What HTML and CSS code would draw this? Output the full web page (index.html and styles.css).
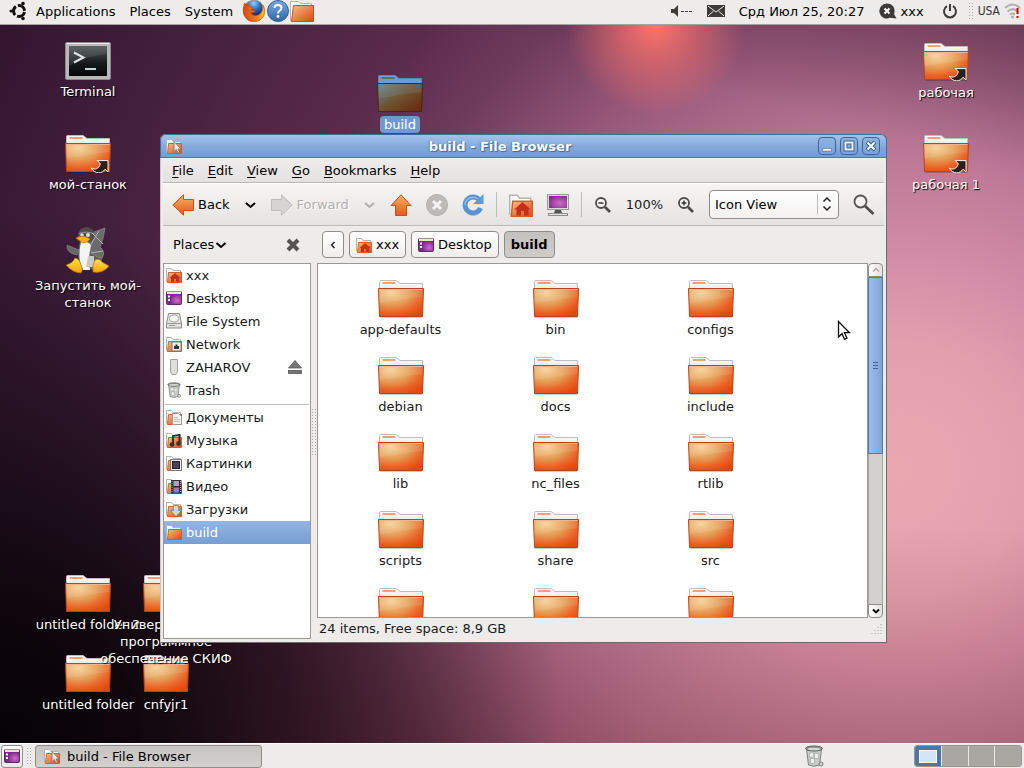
FILE: index.html
```html
<!DOCTYPE html>
<html lang="en">
<head>
  <meta charset="UTF-8" />
  <meta name="viewport" content="width=device-width, initial-scale=1" />
  <title>build - File Browser</title>
  <link rel="stylesheet" href="styles.css">
</head>
<body>
  <!-- shared icons -->
  <svg class="defs" width="0" height="0" aria-hidden="true">
    <defs>
      <radialGradient id="gFolder" cx="0.28" cy="0.15" r="0.95">
        <stop offset="0" stop-color="#f6d197" />
        <stop offset="0.45" stop-color="#e59d56" />
        <stop offset="0.75" stop-color="#ea6428" />
        <stop offset="1" stop-color="#e2480f" />
      </radialGradient>
      <linearGradient id="gPaper" x1="0" y1="0" x2="0" y2="1">
        <stop offset="0" stop-color="#ffffff" />
        <stop offset="1" stop-color="#e4e4e6" />
      </linearGradient>
      <linearGradient id="gOrange" x1="0" y1="0" x2="0" y2="1">
        <stop offset="0" stop-color="#f3b264" />
        <stop offset="1" stop-color="#e8571c" />
      </linearGradient>
      <linearGradient id="gMini" x1="0" y1="0" x2="1" y2="1">
        <stop offset="0" stop-color="#f6bf86" />
        <stop offset="1" stop-color="#dd4714" />
      </linearGradient>
      <linearGradient id="gTerm" x1="0" y1="0" x2="0" y2="1">
        <stop offset="0" stop-color="#4b5254" />
        <stop offset="0.6" stop-color="#15181a" />
        <stop offset="1" stop-color="#050606" />
      </linearGradient>
      <linearGradient id="gSel" x1="0" y1="0" x2="1" y2="1">
        <stop offset="0" stop-color="#6d8a8e" />
        <stop offset="0.5" stop-color="#6d5330" />
        <stop offset="1" stop-color="#6b2408" />
      </linearGradient>
      <radialGradient id="gPurple" cx="0.6" cy="0.6" r="0.7">
        <stop offset="0" stop-color="#d06cc8" />
        <stop offset="1" stop-color="#7e2a8c" />
      </radialGradient>
      <linearGradient id="gHelp" x1="0" y1="0" x2="0" y2="1">
        <stop offset="0" stop-color="#7aabde" />
        <stop offset="1" stop-color="#2f66a6" />
      </linearGradient>
      <radialGradient id="gGlobe" cx="0.45" cy="0.2" r="0.8">
        <stop offset="0" stop-color="#8fd0f5" />
        <stop offset="0.5" stop-color="#2c6fc0" />
        <stop offset="1" stop-color="#12246a" />
      </radialGradient>
      <linearGradient id="gFox" x1="0" y1="0" x2="1" y2="0">
        <stop offset="0" stop-color="#d9480f" />
        <stop offset="0.6" stop-color="#ee7a14" />
        <stop offset="1" stop-color="#fbc52d" />
      </linearGradient>
      <linearGradient id="gFeet" x1="0" y1="0" x2="0" y2="1">
        <stop offset="0" stop-color="#ffe04a" />
        <stop offset="1" stop-color="#f7a30a" />
      </linearGradient>
    </defs>

    <symbol id="folder" viewBox="0 0 46 38">
      <path d="M1.500 12V1.500Q1.500.5 2.500.5H18l4 3H44.500V12z" fill="url(#gPaper)" stroke="#bdbdc0" />
      <rect x="4.500" y="2" width="13" height="2" fill="#f2a27a" />
      <path d="M.5 8.500H45.500L44.500 36.500H1.500z" fill="url(#gFolder)" stroke="#b5451a" />
      <path d="M1.500 9.500H44.500V17C30 18 16 22 1.500 23z" fill="#fff" opacity=".1" />
      <path d="M1.500 9.500H44.500" stroke="#f5b58a" />
      <path d="M2 37.500H44" stroke="#000" opacity=".2" />
    </symbol>

    <symbol id="folder-selected" viewBox="0 0 46 38">
      <path d="M1.500 12V1.500Q1.500.5 2.500.5H18l4 3H44.500V12z" fill="#6f9bd2" stroke="#5d86bd" />
      <rect x="4.500" y="2" width="13" height="2" fill="#6a6a72" />
      <path d="M.5 8.500H45.500L44.500 36.500H1.500z" fill="url(#gSel)" stroke="#4b2412" />
      <path d="M1.500 9.500H44.500V17C30 18 16 22 1.500 23z" fill="#8fb0c0" opacity=".15" />
    </symbol>

    <symbol id="link-arrow" viewBox="0 0 18 14">
      <path d="M6.500 1.500H16.500V12L13.800 9.500C11 14 4.500 14.500 .8 8.500 4.500 10.500 8 9 9.300 4.500z" fill="#2a211d" stroke="#fff" stroke-width=".9" />
    </symbol>

    <symbol id="mini" viewBox="0 0 16 16">
      <path d="M.5 14.500V1.500H5.500L7 3.500H14.500V12" fill="#fff" stroke="#b4b4b4" />
      <path d="M2.500 5.500H15.500V15.500H1.500z" fill="url(#gMini)" stroke="#d0602c" />
    </symbol>

    <symbol id="home" viewBox="0 0 16 16">
      <use href="#mini" />
      <path d="M9 6 3.500 11H5v4h3v-3h2v3h3v-4h1.500z" fill="#c4311a" />
    </symbol>

    <symbol id="desk" viewBox="0 0 16 16">
      <rect x=".5" y="1.500" width="15" height="13" rx="1" fill="#7b2a8c" stroke="#5c2a5e" />
      <rect x="5" y="5" width="10" height="9" fill="url(#gPurple)" />
      <rect x="1" y="1.500" width="14" height="2.500" fill="#e6e6d2" />
      <path d="M2 5.500h2v2H2zM2 9h2v2H2z" fill="#fff" />
    </symbol>

    <symbol id="chev" viewBox="0 0 12 12">
      <path d="M1.500 4L6 8l4.500-4" fill="none" stroke="currentColor" stroke-width="2" />
    </symbol>

    <symbol id="trash" viewBox="0 0 20 22">
      <path d="M2.500 4 4.500 20Q10 22.500 15.500 20L17.500 4z" fill="#c9ccc8" stroke="#7f837e" />
      <ellipse cx="10" cy="3.500" rx="8.500" ry="2.500" fill="#8c918b" stroke="#5f635e" />
      <ellipse cx="10" cy="4" rx="6.500" ry="1.300" fill="#d5d8d4" />
      <path d="M5 9l4-2 1 4-4 2zM11 8l4 1-1 5-4-1zM6 14l4-1 1 5-4 1z" fill="#eef0ed" stroke="#9da19c" stroke-width=".7" />
      <circle cx="17" cy="19" r="2" fill="#d8dad6" stroke="#777" />
    </symbol>

    <symbol id="browser" viewBox="0 0 16 16">
      <use href="#mini" />
      <path d="M8 3.500V13.500L10.300 11.500 12 15 13.500 14.200 12 11H15z" fill="#e8e8e8" stroke="#777" stroke-width=".8" />
    </symbol>
  </svg>

  <header class="panel panel-top">
    <nav class="panel-menu">
      <svg width="20" height="20" viewBox="0 0 20 20">
        <circle cx="11" cy="10" r="5.500" fill="none" stroke="#111" stroke-width="3" stroke-dasharray="9.500 2.020" stroke-dashoffset="-1" />
        <circle cx="3" cy="10" r="1.500" fill="#111" />
        <circle cx="15" cy="2.500" r="1.800" fill="#111" />
        <circle cx="15" cy="17.500" r="1.800" fill="#111" />
      </svg>
      <button>Applications</button>
      <button>Places</button>
      <button>System</button>
    </nav>
    <div class="launchers">
      <button aria-label="Firefox">
        <svg width="24" height="24" viewBox="0 0 24 24">
          <circle cx="12" cy="12" r="11" fill="url(#gFox)" />
          <circle cx="12.500" cy="9" r="8" fill="url(#gGlobe)" />
          <path d="M2.500 4C1 9 .5 14 4 18.500 8 23.500 17 24 21 18 23 14 23 10 21 6 21 12 19 16 14 16.500 11 16.500 9 15 9 13.500 11 14 12.500 13.500 13.500 12 11.500 11.500 9.500 11.500 9.500 10L11.500 8.500 7.500 7.500 5 5.500 4.500 7z" fill="url(#gFox)" stroke="#b73a0a" stroke-width=".5" />
        </svg>
      </button>
      <button aria-label="Help">
        <svg width="24" height="24" viewBox="0 0 24 24">
          <circle cx="12" cy="12" r="10.500" fill="url(#gHelp)" stroke="#2d5f9b" />
          <path d="M8.500 9C8.500 5 15.500 5 15.500 9 15.500 11.500 12 11.500 12 14.500" fill="none" stroke="#fff" stroke-width="2" />
          <circle cx="12" cy="17.500" r="1.400" fill="#fff" />
        </svg>
      </button>
      <button aria-label="File Browser">
        <svg width="24" height="24" viewBox="0 0 24 24">
          <path d="M.5 21.500V2.500H8.500L10.500 4.500H21.500V18" fill="#fff" stroke="#b4b4b4" />
          <path d="M3.500 6.500H23.500V22.500H1.500z" fill="url(#gMini)" stroke="#c9501e" />
        </svg>
      </button>
    </div>
    <div class="tray">
      <svg width="22" height="14" viewBox="0 0 22 14">
        <path d="M0 5h3l4-4v12L3 9H0z" fill="#3c3b37" />
        <path d="M10 7.500h3M14 7.500h3M18 7.500h3" stroke="#3c3b37" />
      </svg>
      <svg width="18" height="12" viewBox="0 0 18 12">
        <rect width="18" height="12" fill="#3c3b37" />
        <path d="M1 1l8 6 8-6M1 11l5.500-5M17 11l-5.500-5" fill="none" stroke="#edecea" />
      </svg>
      <time>Срд Июл 25, 20:27</time>
      <span class="user">
        <svg width="18" height="16" viewBox="0 0 18 16">
          <path d="M8 .5a7.500 7.500 0 1 0 3 14.300L17.500 15.500 15 11A7.500 7.500 0 0 0 8 .5z" fill="#3c3b37" />
          <path d="M5.500 5.500l5 5M10.500 5.500l-5 5" stroke="#fff" stroke-width="2" />
        </svg>
        xxx
      </span>
      <svg class="power" width="16" height="16" viewBox="0 0 16 16">
        <path d="M5 3.200a6 6 0 1 0 6 0M8 1v7" fill="none" stroke="#3c3b37" stroke-width="2" />
      </svg>
      <i class="grip"></i>
      <span class="layout">USA</span>
      <svg class="wifi" width="18" height="18" viewBox="0 0 18 18">
        <path d="M1 6Q8.500-1 16 6M3.500 9.500Q8.500 5 13 9M6 12.500Q8.500 10.500 11 12.500" fill="none" stroke="#b2b0ad" stroke-width="2" />
        <circle cx="8.500" cy="15" r="1.500" fill="#b2b0ad" />
        <path d="M13.500 6v6M13.500 14v2" stroke="#d40000" stroke-width="2" />
      </svg>
    </div>
  </header>

  <main class="desktop">
    <div class="shortcut terminal">
      <svg width="46" height="38" viewBox="0 0 46 38">
        <rect x=".5" y=".5" width="45" height="37" rx="1.500" fill="#b9b9b7" stroke="#8a8a88" />
        <path d="M1.500 1.500h43" stroke="#eee" />
        <rect x="4" y="4" width="38" height="30" fill="url(#gTerm)" />
        <path d="M4 4h38v8Q20 14 4 24z" fill="#fff" opacity=".1" />
        <path d="M9 10.500l9.500 5-9.500 5" fill="none" stroke="#dfe5e8" stroke-width="2" />
        <path d="M20 27h11" stroke="#c8d2da" stroke-width="2" />
      </svg>
      <span>Terminal</span>
    </div>
    <div class="shortcut my-machine">
      <svg width="46" height="38"><use href="#folder" /><use href="#link-arrow" x="25" y="24" width="20" height="15" /></svg>
      <span>мой-станок</span>
    </div>
    <div class="shortcut run-machine">
      <svg width="44" height="47" viewBox="0 0 44 47">
        <path d="M15 9 Q12 20 12 30 Q14 42 22 43 L33 41 Q40 30 32 20 L30 8z" fill="#5e5e5e" />
        <path d="M13 23 1 18Q0 26 11 28z" fill="#666" stroke="#999" stroke-width=".5" />
        <path d="M28 5 39 1Q37 14 34 20 40 25 36 31 27 30 23 21 30 13 28 5z" fill="#6a6a6a" stroke="#999" stroke-width=".6" />
        <path d="M12 7Q14 0 21 0 29 1 29 9L27 14H12z" fill="#4d4d4d" />
        <path d="M13 6.500Q20 3.500 29 7" stroke="#999" fill="none" />
        <path d="M15 15Q11 32 17 43H24Q22 31 25 18 21 13 15 15z" fill="#f4f4f4" />
        <circle cx="16" cy="8" r="1.800" fill="#ddd" /><circle cx="22" cy="8" r="2" fill="#ddd" />
        <path d="M10 11Q17 7 24 12 21 16 17 16z" fill="#f9b015" stroke="#c77a05" stroke-width=".7" />
        <path d="M22 29h6v11h-8z" fill="#c9c9c9" />
        <path d="M26 6 37 17M33 4 25 17M37 24 25 26" stroke="#b5b5b5" fill="none" />
        <path d="M0 38Q7 36 9 31 14 32 15 38 18 42 15 46 7 46 0 38z" fill="url(#gFeet)" stroke="#a86c05" stroke-width=".6" />
        <path d="M27 45Q26 38 29 33 34 31 36 35L43 39Q37 47 27 45z" fill="url(#gFeet)" stroke="#a86c05" stroke-width=".6" />
      </svg>
      <span>Запустить мой-<br>станок</span>
    </div>
    <div class="shortcut build selected">
      <svg width="46" height="38"><use href="#folder-selected" /></svg>
      <span>build</span>
    </div>
    <div class="shortcut work">
      <svg width="46" height="38"><use href="#folder" /><use href="#link-arrow" x="25" y="24" width="20" height="15" /></svg>
      <span>рабочая</span>
    </div>
    <div class="shortcut work-1">
      <svg width="46" height="38"><use href="#folder" /><use href="#link-arrow" x="25" y="24" width="20" height="15" /></svg>
      <span>рабочая 1</span>
    </div>
    <div class="shortcut untitled-2">
      <svg width="46" height="38"><use href="#folder" /></svg>
      <span>untitled folder 2</span>
    </div>
    <div class="shortcut untitled">
      <svg width="46" height="38"><use href="#folder" /></svg>
      <span>untitled folder</span>
    </div>
    <div class="shortcut cnfyjr">
      <svg width="46" height="38"><use href="#folder" /></svg>
      <span>cnfyjr1</span>
    </div>
    <div class="shortcut skif">
      <svg width="46" height="38"><use href="#folder" /></svg>
      <span>Универсальное<br>программное<br>обеспечение СКИФ</span>
    </div>

    <section class="window">
      <div class="titlebar">
        <svg width="16" height="16"><use href="#browser" /></svg>
        <h1>build - File Browser</h1>
        <button aria-label="Minimize"><svg width="16" height="16"><path d="M3.500 10.500h9v2.500h-9z" fill="#fff" stroke="#3d6494" stroke-width=".6" /></svg></button>
        <button aria-label="Maximize"><svg width="16" height="16"><path d="M4.500 4.500h7v7h-7z" fill="none" stroke="#3d6494" stroke-width="4" /><path d="M4.500 4.500h7v7h-7z" fill="none" stroke="#e6f0fb" stroke-width="2" /></svg></button>
        <button aria-label="Close"><svg width="16" height="16"><path d="M4 4l8 8M12 4l-8 8" stroke="#3d6494" stroke-width="4" /><path d="M4.500 4.500l7 7M11.500 4.500l-7 7" stroke="#fff" stroke-width="2" /></svg></button>
      </div>

      <nav class="menubar">
        <button><u>F</u>ile</button>
        <button><u>E</u>dit</button>
        <button><u>V</u>iew</button>
        <button><u>G</u>o</button>
        <button><u>B</u>ookmarks</button>
        <button><u>H</u>elp</button>
      </nav>

      <div class="toolbar">
        <button>
          <svg width="22" height="22" viewBox="0 0 22 22"><path d="M.8 11 11.500.8V5.500H21.500V16.500H11.500V21.200z" fill="url(#gOrange)" stroke="#c4501c" /></svg>
          Back
        </button>
        <button aria-label="Back history"><svg width="13" height="12"><use href="#chev" /></svg></button>
        <button disabled>
          <svg width="22" height="22" viewBox="0 0 22 22"><path d="M21.200 11 10.500.8V5.500H.5V16.500H10.500V21.200z" fill="#d6d4d2" stroke="#bfbdbb" /></svg>
          Forward
        </button>
        <button aria-label="Forward history" disabled><svg width="13" height="12"><use href="#chev" /></svg></button>
        <button aria-label="Up"><svg width="22" height="22" viewBox="0 0 22 22"><path d="M11 .8 21 11.500H16.500V21.500H5.500V11.500H1z" fill="url(#gOrange)" stroke="#c4501c" /></svg></button>
        <button aria-label="Stop" disabled><svg width="22" height="22" viewBox="0 0 22 22"><circle cx="11" cy="11" r="10.500" fill="#bebab8" stroke="#b2aeac" /><path d="M7 7l8 8M15 7l-8 8" stroke="#f4f3f2" stroke-width="3" /></svg></button>
        <button aria-label="Reload"><svg width="22" height="22" viewBox="0 0 22 22"><path d="M17 5.500A8 8 0 1 0 18.500 14" fill="none" stroke="#5a93d2" stroke-width="5" /><path d="M21.500 0V10H11z" fill="#5f9bd8" /><path d="M16 5A8 8 0 0 0 3 11" fill="none" stroke="#8fbbe8" stroke-width="1.500" /></svg></button>
        <i class="sep"></i>
        <button aria-label="Home"><svg width="24" height="24" viewBox="0 0 16 16"><use href="#home" width="16" height="16" /></svg></button>
        <button aria-label="Computer">
          <svg width="22" height="24" viewBox="0 0 22 24">
            <rect x=".5" y="1.500" width="21" height="15" fill="#dcdcda" stroke="#9a9a98" />
            <rect x="2" y="3" width="18" height="12" fill="url(#gPurple)" />
            <path d="M8 17h6l1 3H7z" fill="#555" />
            <rect x="1.500" y="20.500" width="19" height="2" fill="#e5e5e3" stroke="#8d8d8b" />
          </svg>
        </button>
        <i class="sep"></i>
        <button aria-label="Zoom out"><svg width="18" height="18" viewBox="0 0 18 18"><circle cx="7" cy="7" r="5" fill="#f7f6f5" stroke="#4b4b49" stroke-width="1.800" /><path d="M4.500 7h5" stroke="#333" stroke-width="1.500" /><path d="M11 11l5 5" stroke="#4b4b49" stroke-width="2.600" /></svg></button>
        <span>100%</span>
        <button aria-label="Zoom in"><svg width="18" height="18" viewBox="0 0 18 18"><circle cx="7" cy="7" r="5" fill="#f7f6f5" stroke="#4b4b49" stroke-width="1.800" /><path d="M4.500 7h5M7 4.500v5" stroke="#333" stroke-width="1.500" /><path d="M11 11l5 5" stroke="#4b4b49" stroke-width="2.600" /></svg></button>
        <div class="combo">
          <select aria-label="View mode">
            <option>Icon View</option>
            <option>List View</option>
            <option>Compact View</option>
          </select>
          <svg width="22" height="20" viewBox="0 0 22 20"><path d="M.5 0v20" stroke="#c0bebc" /><path d="M6.500 7.500l3.500-3.500 3.500 3.500M6.500 12.500l3.500 3.500 3.500-3.500" fill="none" stroke="#222" stroke-width="1.500" /></svg>
        </div>
        <button aria-label="Search"><svg width="22" height="22" viewBox="0 0 22 22"><circle cx="7.500" cy="7.500" r="6" fill="#f4f3f2" stroke="#555" stroke-width="1.800" /><path d="M12 12l8.500 8" stroke="#4b4b49" stroke-width="2.800" /></svg></button>
      </div>

      <div class="panes">
        <aside class="side">
          <div class="side-head">
            <button>Places<svg width="12" height="12"><use href="#chev" /></svg></button>
            <button aria-label="Close sidebar"><svg width="14" height="14" viewBox="0 0 14 14"><path d="M2 2l10 10M12 2L2 12" stroke="#555452" stroke-width="4" /></svg></button>
          </div>
          <ul class="places">
            <li><svg width="16" height="16"><use href="#home" /></svg>xxx</li>
            <li><svg width="16" height="16"><use href="#desk" /></svg>Desktop</li>
            <li>
              <svg width="16" height="16" viewBox="0 0 16 16"><path d="M2.500.5H13.500L15.500 10.500V15H.5V10.500z" fill="#e2e2e0" stroke="#8b8b89" /><ellipse cx="8" cy="5.500" rx="4.500" ry="3.500" fill="#f6f6f5" stroke="#aaa" /><path d="M.5 10.500h15M3 12.500h6" stroke="#999" fill="none" /></svg>File System
            </li>
            <li><svg width="16" height="16"><use href="#mini" /><rect x="6" y="6" width="9" height="9" fill="#eee" stroke="#777" /><path d="M8 13v-3h1.500V8.500h2V10H13v3z" fill="#333" /></svg>Network</li>
            <li>
              <svg width="16" height="16" viewBox="0 0 16 16"><path d="M4.500.5h7V13l-1.500 2.500H6L4.500 13z" fill="#dededc" stroke="#a2a2a0" /></svg>ZAHAROV
              <button class="eject" aria-label="Eject"><svg width="14" height="14" viewBox="0 0 14 14"><path d="M7 .5 13.500 8H.5z" fill="#777" stroke="#555" stroke-width=".8" /><rect x=".5" y="10.500" width="13" height="3" fill="#777" stroke="#555" stroke-width=".8" /></svg></button>
            </li>
            <li><svg width="16" height="16"><use href="#trash" /></svg>Trash</li>
            <li class="line"></li>
            <li><svg width="16" height="16"><use href="#mini" /><path d="M6.500 4.500h6l3 3v8h-9z" fill="#f2f2f0" stroke="#999" /><path d="M8 8.500h4M8 10.500h6M8 12.500h6" stroke="#bbb" /></svg>Документы</li>
            <li><svg width="16" height="16"><use href="#mini" /><path d="M7 12V4l6.500-1v8.500" fill="none" stroke="#333" stroke-width="2" /><circle cx="6" cy="12.500" r="2.300" fill="#333" /><circle cx="12.500" cy="11.500" r="2.300" fill="#333" /></svg>Музыка</li>
            <li><svg width="16" height="16"><use href="#mini" /><path d="M4.500 4.500h11v11h-11z" fill="#eee" stroke="#777" /><rect x="6.500" y="6.500" width="7" height="7" fill="#4a4360" stroke="#222" /></svg>Картинки</li>
            <li><svg width="16" height="16"><use href="#mini" /><rect x="5" y="2" width="10.500" height="13.500" fill="#2f2a33" /><rect x="7.500" y="3" width="5.500" height="5" fill="#b79ac6" /><rect x="7.500" y="9.500" width="5.500" height="5" fill="#9a7cb0" /><path d="M6 3v12M14.500 3v12" stroke="#c8a08a" stroke-dasharray="1 1" /></svg>Видео</li>
            <li><svg width="16" height="16"><use href="#mini" /><path d="M7.500 4.500h5v5H15.500L10 15.500 4.500 9.500h3z" fill="#d6d6d4" stroke="#8c8c8a" /></svg>Загрузки</li>
            <li class="current"><svg width="16" height="16"><use href="#mini" /></svg>build</li>
          </ul>
        </aside>

        <i class="grip splitter"></i>

        <div class="content">
          <div class="pathbar">
            <button aria-label="Scroll path left"><svg width="8" height="10" viewBox="0 0 8 10"><path d="M5.500 2l-3 3 3 3" fill="none" stroke="#222" stroke-width="1.500" /></svg></button>
            <button><svg width="16" height="16"><use href="#home" /></svg>xxx</button>
            <button><svg width="16" height="16"><use href="#desk" /></svg>Desktop</button>
            <button class="active">build</button>
          </div>
          <div class="view">
            <div class="icons">
              <figure><svg width="46" height="38"><use href="#folder" /></svg><figcaption>app-defaults</figcaption></figure>
              <figure><svg width="46" height="38"><use href="#folder" /></svg><figcaption>bin</figcaption></figure>
              <figure><svg width="46" height="38"><use href="#folder" /></svg><figcaption>configs</figcaption></figure>
              <figure><svg width="46" height="38"><use href="#folder" /></svg><figcaption>debian</figcaption></figure>
              <figure><svg width="46" height="38"><use href="#folder" /></svg><figcaption>docs</figcaption></figure>
              <figure><svg width="46" height="38"><use href="#folder" /></svg><figcaption>include</figcaption></figure>
              <figure><svg width="46" height="38"><use href="#folder" /></svg><figcaption>lib</figcaption></figure>
              <figure><svg width="46" height="38"><use href="#folder" /></svg><figcaption>nc_files</figcaption></figure>
              <figure><svg width="46" height="38"><use href="#folder" /></svg><figcaption>rtlib</figcaption></figure>
              <figure><svg width="46" height="38"><use href="#folder" /></svg><figcaption>scripts</figcaption></figure>
              <figure><svg width="46" height="38"><use href="#folder" /></svg><figcaption>share</figcaption></figure>
              <figure><svg width="46" height="38"><use href="#folder" /></svg><figcaption>src</figcaption></figure>
              <figure><svg width="46" height="38"><use href="#folder" /></svg></figure>
              <figure><svg width="46" height="38"><use href="#folder" /></svg></figure>
              <figure><svg width="46" height="38"><use href="#folder" /></svg></figure>
            </div>
            <div class="scrollbar">
              <button aria-label="Scroll up" disabled><svg width="8" height="8" viewBox="0 0 8 8"><path d="M1 5.500l3-3 3 3" fill="none" stroke="currentColor" stroke-width="1.500" /></svg></button>
              <div class="track"><div class="thumb"><i></i></div></div>
              <button aria-label="Scroll down"><svg width="8" height="8" viewBox="0 0 8 8"><path d="M1 2.500l3 3 3-3" fill="none" stroke="currentColor" stroke-width="1.800" /></svg></button>
            </div>
          </div>
          <footer class="status">
            <span>24 items, Free space: 8,9 GB</span>
            <svg width="12" height="12" viewBox="0 0 12 12"><path d="M10 1v1M10 4v1M7 4v1M10 7v1M7 7v1M4 7v1M10 10v1M7 10v1M4 10v1M1 10v1" stroke="#a5a3a1" /></svg>
          </footer>
        </div>
      </div>
    </section>

    <svg class="pointer" width="14" height="21" viewBox="0 0 14 21"><path d="M1.500 1.500V17L5 13.700 7.500 19.300 10 18.200 7.500 12.700H12.500z" fill="#fff" stroke="#111" stroke-width="1.300" /></svg>
  </main>

  <footer class="panel panel-bottom">
    <button class="show-desktop" aria-label="Show desktop"><svg width="16" height="16"><use href="#desk" /></svg></button>
    <i class="grip"></i>
    <button class="task"><svg width="16" height="16"><use href="#browser" /></svg>build - File Browser</button>
    <svg class="bin" width="20" height="22"><use href="#trash" /></svg>
    <div class="workspaces"><b><i></i></b><b></b><b></b><b></b></div>
  </footer>
</body>
</html>
```

FILE: styles.css
```css
* {
  box-sizing: border-box;
}
body {
  margin: 0;
  height: 100vh;
  display: flex;
  flex-direction: column;
  overflow: hidden;
  font-family: "DejaVu Sans", sans-serif;
  font-size: 13px;
  line-height: 17px;
  color: #1a1a1a;
}
svg {
  display: block;
  flex: none;
}
button {
  display: flex;
  align-items: center;
  gap: 4px;
  margin: 0;
  padding: 0;
  border: none;
  background: none;
  font: inherit;
  color: #000;
  white-space: nowrap;
}
.defs {
  position: absolute;
}

/* panels */
.panel {
  display: flex;
  align-items: center;
  height: 25px;
  flex: none;
  background: #edecea;
}
.panel-top {
  padding: 0 2px 2px 8px;
  border-bottom: 1px solid #a5a3a0;
}
.panel-menu {
  display: flex;
  align-items: center;
  gap: 14px;
  margin-right: 9px;
}
.panel-menu svg {
  margin-right: -6px;
}
.launchers {
  display: flex;
}
.tray {
  display: flex;
  align-items: center;
  gap: 14px;
  margin-left: auto;
  color: #000;
}
.user {
  display: flex;
  align-items: center;
  gap: 4px;
}
.power {
  margin: 0 -4px 0 4px;
}
.layout {
  font-family: "DejaVu Sans Condensed", "DejaVu Sans", sans-serif;
  font-size: 12px;
  color: #333;
  margin-left: -10px;
}
.wifi {
  margin-left: -10px;
}
.grip {
  width: 6px;
  height: 18px;
  background-image: radial-gradient(circle, #a9a7a5 0 1px, transparent 1px);
  background-size: 3px 3px;
}
.panel-bottom {
  gap: 3px;
  padding: 0 2px 0 1px;
  border-top: 1px solid #fff;
}
.show-desktop,
.task {
  height: 23px;
  border: 1px solid #8f8d8a;
  border-radius: 3px;
  background: linear-gradient(#fff, #e8e7e5);
}
.show-desktop {
  width: 22px;
  justify-content: center;
}
.task {
  width: 227px;
  padding-left: 8px;
  gap: 7px;
  background: linear-gradient(#c6c4c1, #d3d1ce);
}
.bin {
  margin-left: auto;
  margin-right: 87px;
}
.workspaces {
  display: flex;
  gap: 1px;
  width: 108px;
  height: 22px;
  border: 1px solid #99968f;
  border-radius: 3px;
  background: #e9e8e6;
  overflow: hidden;
}
.workspaces b {
  flex: 1;
  background: #aaa7a3;
}
.workspaces b:first-child {
  display: flex;
  align-items: center;
  justify-content: center;
  background: #4b76aa;
}
.workspaces i {
  width: 18px;
  height: 13px;
  border: 1px solid #fff;
  background: #d3e3f8;
}

/* desktop */
.desktop {
  position: relative;
  flex: 1;
  overflow: hidden;
  background:
    radial-gradient(circle 90px at 64% 0, #ff746c 0, rgba(245, 110, 108, 0.7) 35%, rgba(200, 95, 110, 0) 100%),
    radial-gradient(ellipse 55% 75% at 0 100%, #050205 0, rgba(5, 2, 5, 0.85) 25%, rgba(10, 4, 10, 0) 100%),
    linear-gradient(transparent 70%, rgba(110, 40, 30, 0.25)),
    linear-gradient(15deg, transparent 85%, rgba(50, 20, 40, 0.4)),
    radial-gradient(circle 1050px at 88% 62%, #eba7b0 0, #e39fae 12%, #d48da7 20%, #b2708f 34%, #98587a 43%, #703c5e 53%, #5a2a4c 62%, #44203f 79%, #341530 95%);
}
.shortcut {
  position: absolute;
  display: flex;
  flex-direction: column;
  align-items: center;
  gap: 3px;
  width: 110px;
  text-align: center;
  white-space: nowrap;
  color: #fff;
  text-shadow: 1px 1px 1px #000;
}
.terminal {
  left: 33px;
  top: 17px;
}
.my-machine {
  left: 33px;
  top: 110px;
}
.run-machine {
  left: 33px;
  top: 202px;
}
.build {
  left: 345px;
  top: 50px;
}
.work {
  right: 23px;
  top: 18px;
}
.work-1 {
  right: 23px;
  top: 110px;
}
.untitled-2 {
  left: 33px;
  top: 550px;
}
.untitled {
  left: 33px;
  top: 630px;
}
.cnfyjr {
  left: 111px;
  top: 630px;
}
.skif {
  left: 111px;
  top: 550px;
}
.selected span {
  padding: 0 4px;
  border-radius: 4px;
  background: #7299cf;
  text-shadow: none;
}
.pointer {
  position: absolute;
  left: 837px;
  top: 295px;
}

/* file browser window */
.window {
  position: absolute;
  left: 160px;
  right: 137px;
  top: 109px;
  bottom: 100px;
  display: flex;
  flex-direction: column;
  border: 1px solid #6c6b69;
  border-left-color: #c9c7c5;
  border-top: none;
  border-radius: 6px 6px 0 0;
  background: #edecea;
}
.titlebar {
  display: flex;
  align-items: center;
  gap: 4px;
  height: 24px;
  flex: none;
  margin: 0 -1px;
  padding: 0 6px 0 5px;
  border: 1px solid #44699a;
  border-bottom-color: #4c78ae;
  border-radius: 6px 6px 0 0;
  background: linear-gradient(#a3c2ea, #80a7d9 60%, #739dd0);
}
.titlebar h1 {
  flex: 1;
  margin: 0;
  font-size: 13px;
  text-align: center;
  color: #fff;
  text-shadow: 1px 1px 1px #3e659a, -1px 0 1px #5a82b6;
}
.titlebar button {
  width: 18px;
  height: 18px;
  justify-content: center;
  border: 1px solid #3f6596;
  border-radius: 4px;
  background: linear-gradient(#8fb3e0, #7ba3d6);
}
.menubar {
  display: flex;
  align-items: center;
  gap: 14px;
  height: 25px;
  flex: none;
  margin: 0 2px;
  padding-left: 9px;
  border-bottom: 1px solid #bbb9b7;
  background: linear-gradient(#efeeed, #e3e2e0);
}
.menubar button {
  display: block;
}
.menubar u {
  text-underline-offset: 2px;
}
.toolbar {
  display: flex;
  align-items: center;
  gap: 14px;
  height: 43px;
  flex: none;
  margin: 0 2px;
  padding-left: 9px;
  border-top: 1px solid #fff;
  border-bottom: 1px solid #bbb9b7;
  background: linear-gradient(#f6f5f4, #e4e3e1);
}
.toolbar button:disabled {
  color: #b0aeac;
  text-shadow: 1px 1px 0 #fff;
}
.sep {
  width: 1px;
  height: 25px;
  margin: 0 -2px;
  background: #bfbdbb;
}
.combo {
  position: relative;
  width: 130px;
  height: 29px;
}
.combo select {
  appearance: none;
  width: 100%;
  height: 100%;
  padding: 0 5px;
  border: 1px solid #8f8d8a;
  border-radius: 4px;
  background: linear-gradient(#fff, #f3f2f1);
  font: inherit;
  color: #000;
}
.combo svg {
  position: absolute;
  right: 0;
  top: 4px;
  pointer-events: none;
}
.panes {
  display: flex;
  flex: 1;
  min-height: 0;
  padding: 0 3px 3px 2px;
}
.side {
  display: flex;
  flex-direction: column;
  width: 148px;
}
.side-head {
  display: flex;
  align-items: center;
  justify-content: space-between;
  height: 37px;
  flex: none;
  padding: 0 11px 0 10px;
}
.side-head button {
  gap: 1px;
}
.places {
  flex: 1;
  margin: 0;
  padding: 0;
  list-style: none;
  border: 1px solid #9b9894;
  background: #fff;
}
.places li {
  display: flex;
  align-items: center;
  gap: 4px;
  height: 23px;
  padding: 0 8px 1px 2px;
}
.places .line {
  height: 4px;
  margin: 0 1px;
  background: linear-gradient(#c4c2c0, #c4c2c0) 0 2px / 100% 1px no-repeat;
}
.places .current {
  color: #fff;
  background: linear-gradient(#94b5e2, #769fd2);
}
.eject {
  margin-left: auto;
}
.splitter {
  width: 6px;
  height: 48px;
  margin-top: 182px;
}
.content {
  display: flex;
  flex-direction: column;
  flex: 1;
  min-width: 0;
}
.pathbar {
  display: flex;
  align-items: center;
  gap: 5px;
  height: 37px;
  flex: none;
  padding-left: 5px;
}
.pathbar button {
  height: 27px;
  padding: 0 6px;
  gap: 4px;
  border: 1px solid #8f8d8a;
  border-radius: 4px;
  background: linear-gradient(#fff, #efeeed);
}
.pathbar .active {
  font-weight: bold;
  background: linear-gradient(#c3c1be, #cfcdca);
}
.view {
  display: flex;
  flex: 1;
  min-height: 0;
}
.icons {
  display: grid;
  grid-template-columns: repeat(auto-fill, 155px);
  grid-auto-rows: 77px;
  flex: 1;
  padding: 16px 0 0 5px;
  overflow: hidden;
  border: 1px solid #9b9894;
  background: #fff;
}
.icons figure {
  display: flex;
  flex-direction: column;
  align-items: center;
  gap: 3px;
  margin: 0;
}
.scrollbar {
  display: flex;
  flex-direction: column;
  width: 15px;
}
.scrollbar button {
  height: 14px;
  justify-content: center;
  border: 1px solid #8f8d8a;
  border-radius: 4px 4px 0 0;
  background: linear-gradient(to right, #fff, #e3e2e0);
}
.scrollbar button:last-child {
  border-radius: 0 0 4px 4px;
}
.scrollbar button:disabled {
  color: #b0aeac;
}
.track {
  flex: 1;
  border: solid #a9a7a5;
  border-width: 0 1px;
  background: #d3d1cf;
}
.thumb {
  display: flex;
  align-items: center;
  justify-content: center;
  height: 54%;
  margin: 0 -1px;
  border: 1px solid #4f7bb3;
  background: linear-gradient(to right, #9cbce8, #7ea5d8);
}
.thumb i {
  width: 5px;
  height: 7px;
  border: solid #3f6596;
  border-width: 1px 0;
  background: linear-gradient(#3f6596, #3f6596) 0 2px / 100% 1px no-repeat;
}
.status {
  display: flex;
  align-items: center;
  justify-content: space-between;
  height: 21px;
  flex: none;
  padding-left: 2px;
}
```
